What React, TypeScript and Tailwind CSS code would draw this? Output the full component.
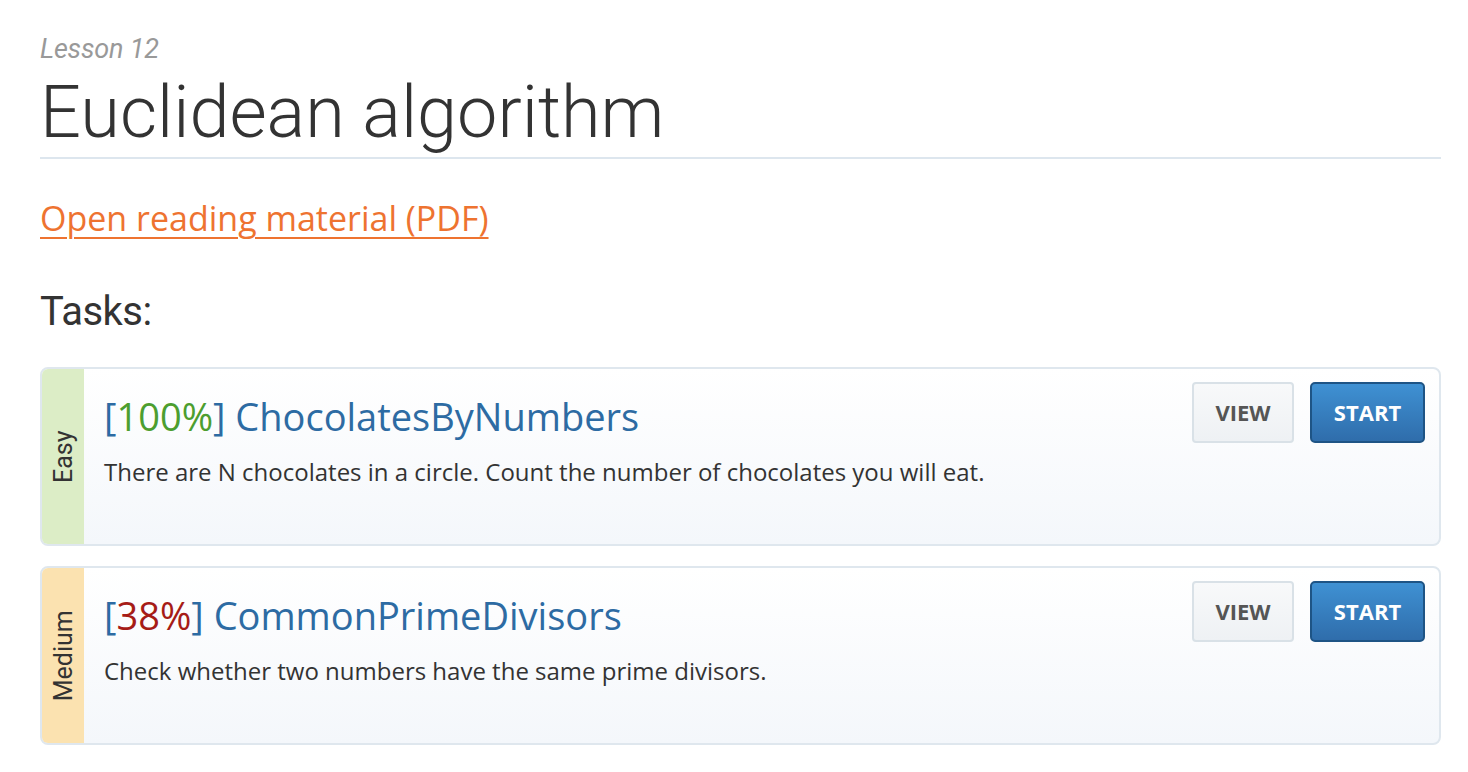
import React from 'react'

type Task = {
  level: string
  pct: number
  name: string
  desc: string
}

const tasks: Task[] = [
  {
    level: 'Easy',
    pct: 100,
    name: 'ChocolatesByNumbers',
    desc: 'There are N chocolates in a circle. Count the number of chocolates you will eat.',
  },
  {
    level: 'Medium',
    pct: 38,
    name: 'CommonPrimeDivisors',
    desc: 'Check whether two numbers have the same prime divisors.',
  },
]

function TaskCard({ task }: { task: Task }) {
  const stripe = task.level === 'Easy' ? 'bg-[#dcedc6]' : 'bg-[#fbe2b0]'
  const pctColor = task.pct === 100 ? 'text-[#4c9e2f]' : 'text-[#a61c17]'

  return (
    <div className="flex h-[179px] rounded-[8px] border-2 border-[#dfe7ee] overflow-hidden bg-gradient-to-b from-white to-[#f4f7fb]">
      {/* difficulty stripe */}
      <div className={`w-[42px] shrink-0 flex items-center justify-center ${stripe}`}>
        <span className="-rotate-90 whitespace-nowrap text-[25px] text-[#333] font-['Roboto',sans-serif]">
          {task.level}
        </span>
      </div>

      <div className="flex-1 flex justify-between pl-[20px] pr-[14px] pt-[13px]">
        <div className="font-['Open_Sans',sans-serif]">
          <h3 className="text-[38px] leading-[50px] text-[#2d6ba3] mt-[9px]">
            [<span className={pctColor}>{task.pct}%</span>] {task.name}
          </h3>
          <p className="text-[24px] leading-[32px] text-[#333] mt-[15px]">{task.desc}</p>
        </div>

        <div className="flex gap-[16px] font-['Open_Sans',sans-serif] font-bold text-[22px]">
          <button className="w-[102px] h-[61px] rounded-[4px] border-2 border-[#d9e1e7] bg-gradient-to-b from-[#f8f9fa] to-[#eef1f4] text-[#555]">
            VIEW
          </button>
          <button className="w-[115px] h-[61px] rounded-[5px] border-2 border-[#1e5485] bg-gradient-to-b from-[#3f91d3] to-[#2f6dab] text-white">
            START
          </button>
        </div>
      </div>
    </div>
  )
}

export default function App() {
  return (
    <div className="min-h-screen bg-white pl-[40px] pr-[27px] pt-[30px] font-['Roboto',sans-serif]">
      <p className="text-[27px] italic text-[#999] leading-[38px] tracking-[-0.2px]">Lesson 12</p>
      <h1 className="mt-[5px] text-[72px] font-light text-[#333] leading-[80px] pb-[4px] border-b-2 border-[#dde6ee]">
        Euclidean algorithm
      </h1>

      <a
        href="#"
        className="inline-block mt-[36px] text-[34px] leading-[46px] text-[#ee7330] underline underline-offset-[6px] decoration-[2px] font-['Open_Sans',sans-serif]"
      >
        Open reading material (PDF)
      </a>

      <h2 className="mt-[47px] text-[40px] text-[#333] leading-[48px] tracking-[-0.5px]">Tasks:</h2>

      <div className="mt-[31px] flex flex-col gap-[20px]">
        {tasks.map((t) => (
          <TaskCard key={t.name} task={t} />
        ))}
      </div>
    </div>
  )
}
